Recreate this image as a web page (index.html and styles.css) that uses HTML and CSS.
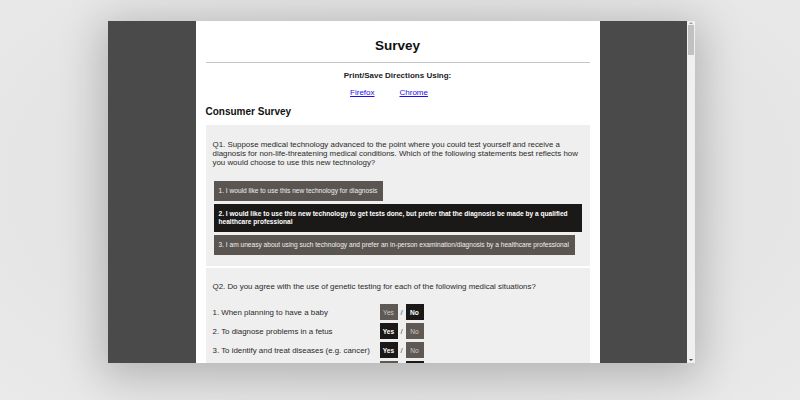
FILE: index.html
```html
<!DOCTYPE html>
<html lang="en">
<head>
<meta charset="utf-8">
<title>Survey</title>
<link rel="stylesheet" href="styles.css">
</head>
<body>
<div class="window">
  <div class="page">
    <div class="content">
      <h1 class="title">Survey</h1>
      <hr class="rule">
      <p class="directions">Print/Save Directions Using:</p>
      <p class="links"><a href="#">Firefox</a><a href="#">Chrome</a></p>
      <h2 class="section">Consumer Survey</h2>
      <div class="question">
        <p class="q-text">Q1. Suppose medical technology advanced to the point where you could test yourself and receive a diagnosis for non-life-threatening medical conditions. Which of the following statements best reflects how you would choose to use this new technology?</p>
        <div class="options">
          <div class="opt">1. I would like to use this new technology for diagnosis</div>
          <div class="opt on">2. I would like to use this new technology to get tests done, but prefer that the diagnosis be made by a qualified healthcare professional</div>
          <div class="opt">3. I am uneasy about using such technology and prefer an in-person examination/diagnosis by a healthcare professional</div>
        </div>
      </div>
      <div class="question q2">
        <p class="q-text">Q2. Do you agree with the use of genetic testing for each of the following medical situations?</p>
        <div class="rows">
          <div class="row"><span class="label">1. When planning to have a baby</span><span class="yn">Yes</span><span class="slash">/</span><span class="yn on">No</span></div>
          <div class="row"><span class="label">2. To diagnose problems in a fetus</span><span class="yn on">Yes</span><span class="slash">/</span><span class="yn">No</span></div>
          <div class="row"><span class="label">3. To identify and treat diseases (e.g. cancer)</span><span class="yn on">Yes</span><span class="slash">/</span><span class="yn">No</span></div>
          <div class="row"><span class="label"></span><span class="yn"></span><span class="slash"></span><span class="yn on"></span></div>
        </div>
      </div>
    </div>
  </div>
  <div class="scrollbar">
    <div class="arrow up"></div>
    <div class="thumb"></div>
    <div class="track"></div>
    <div class="arrow down"></div>
  </div>
</div>
</body>
</html>
```

FILE: styles.css
```css
html, body {
  margin: 0;
  padding: 0;
}
body {
  width: 800px;
  height: 400px;
  overflow: hidden;
  background: radial-gradient(ellipse 70% 80% at 50% 45%, #d8d8d8 0%, #e4e4e4 60%, #eaeaea 100%);
  font-family: "Liberation Sans", Arial, sans-serif;
  padding-top: 21px;
  box-sizing: border-box;
}
.window {
  width: 587px;
  height: 342px;
  margin-left: 108px;
  display: flex;
  box-shadow: 0 8px 40px 6px rgba(0, 0, 0, 0.22);
}
.page {
  flex: 1;
  background: #4a4a4a;
  overflow: hidden;
  display: flex;
  justify-content: center;
}
.content {
  width: 404px;
  flex: none;
  background: #fff;
  padding: 0 10px;
  box-sizing: border-box;
  color: #222;
}
.title {
  margin: 17px 0 0;
  font-size: 13.5px;
  line-height: 16px;
  text-align: center;
  color: #111;
}
.rule {
  margin: 8px 0 0;
  border: 0;
  border-top: 1px solid #c4c4c4;
  height: 0;
}
.directions {
  margin: 8px 0 0;
  font-size: 8px;
  line-height: 10px;
  font-weight: bold;
  text-align: center;
}
.links {
  margin: 7px 0 0;
  font-size: 8px;
  line-height: 10px;
  display: flex;
  justify-content: center;
  gap: 25px;
  padding-right: 17px;
}
.links a {
  color: #1a0dee;
}
.section {
  margin: 8px 0 0;
  font-size: 10px;
  line-height: 12px;
  color: #111;
}
.question {
  background: #efefef;
  margin-top: 7px;
  padding: 15px 7px 11px;
}
.q2 {
  margin-top: 2px;
  padding-top: 14px;
}
.q-text {
  margin: 0;
  font-size: 7.9px;
  line-height: 9px;
  color: #2a2a2a;
}
.options {
  margin: 14px 1px 0;
  display: flex;
  flex-direction: column;
  align-items: flex-start;
  gap: 3px;
}
.opt {
  background: #5b5552;
  color: #eee;
  font-size: 6.6px;
  line-height: 8px;
  padding: 6px 6px 6px 5px;
}
.opt.on {
  background: #1b1917;
  color: #fff;
  font-weight: bold;
}
.rows {
  margin-top: 13px;
  display: flex;
  flex-direction: column;
  gap: 3px;
}
.row {
  display: flex;
  align-items: center;
  height: 16px;
}
.label {
  width: 167px;
  font-size: 7.9px;
  color: #2a2a2a;
}
.yn {
  width: 18px;
  height: 16px;
  display: flex;
  align-items: center;
  justify-content: center;
  background: #5f5955;
  color: #cfcac6;
  font-size: 6.6px;
}
.yn.on {
  background: #1b1917;
  color: #fff;
  font-weight: bold;
}
.slash {
  width: 8px;
  text-align: center;
  font-size: 8px;
  color: #555;
}
.scrollbar {
  width: 8px;
  background: #f0f0f0;
  display: flex;
  flex-direction: column;
  align-items: center;
}
.arrow {
  width: 0;
  height: 0;
  border-left: 2px solid transparent;
  border-right: 2px solid transparent;
}
.arrow.up {
  margin: 1px 0 1px;
  border-bottom: 2px solid #a0a0a0;
}
.arrow.down {
  margin: 1px 0 2px;
  border-top: 2px solid #505050;
}
.thumb {
  width: 6px;
  height: 30px;
  background: #c1c1c1;
}
.track {
  flex: 1;
}
```
